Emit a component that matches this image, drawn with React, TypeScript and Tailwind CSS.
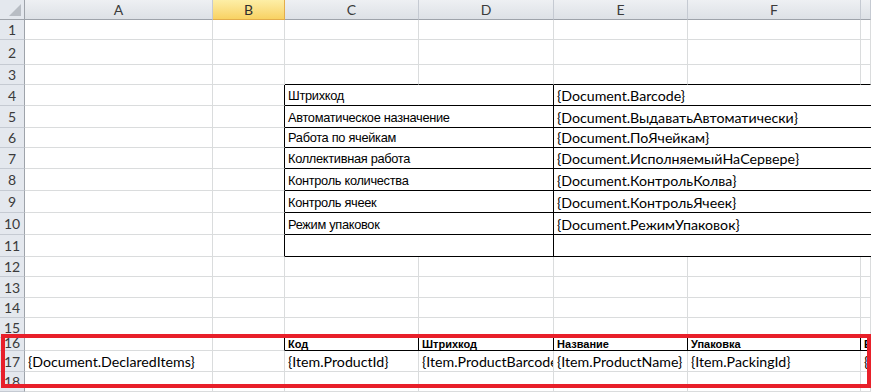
import React from "react";

// Spreadsheet template preview (Excel 2010 look)

type CellSpec = {
  w?: number; // width in px, undefined = fill remaining
  text?: string;
  kind?: "label" | "field" | "head";
  r?: "grid" | "black" | "none";
  b?: "grid" | "black";
};

const W = { A: 188, B: 72, C: 134, D: 135, E: 134, F: 173 };

const calibri = "font-['Lato','Open_Sans',sans-serif]";

function Cell({ w, text, kind = "field", r = "grid", b = "grid" }: CellSpec) {
  const border =
    (r === "black" ? "border-r border-r-black " : r === "none" ? "" : "border-r border-r-[#dadcdd] ") +
    (b === "black" ? "border-b border-b-black" : "border-b border-b-[#dadcdd]");
  const font =
    kind === "label"
      ? "font-['Liberation_Sans',Arial,sans-serif] text-[12.8px] tracking-[-0.3px] leading-[15px] pb-[2px]"
      : kind === "head"
        ? "font-['Liberation_Sans',Arial,sans-serif] text-[11px] font-bold leading-[12px]"
        : `${calibri} text-[14.2px] leading-[17px] pb-[1px]`;
  return (
    <div
      className={`${border} ${font} flex items-end overflow-hidden whitespace-nowrap pl-[3px] text-black ${w ? "shrink-0" : "flex-1"}`}
      style={w ? { width: w } : undefined}
    >
      {text}
    </div>
  );
}

function Row({ n, h, cells, clipTop }: { n: number; h: number; cells: CellSpec[]; clipTop?: boolean }) {
  return (
    <div className="flex" style={{ height: h }}>
      <div
        className={`w-[25px] shrink-0 border-r border-b border-r-[#9ea3aa] border-b-[#c5cad2] bg-[#e4e8ee] ${calibri} flex justify-center overflow-hidden text-[14px] text-[#3b3b3b] ${clipTop ? "items-end leading-[14px]" : "items-center"}`}
      >
        {n}
      </div>
      {cells.map((c, i) => (
        <Cell key={i} {...c} />
      ))}
    </div>
  );
}

const plain = (): CellSpec[] => [
  { w: W.A },
  { w: W.B },
  { w: W.C },
  { w: W.D },
  { w: W.E },
  { w: W.F },
  {},
];

const blackBottomFromC = (): CellSpec[] => [
  { w: W.A },
  { w: W.B },
  { w: W.C, b: "black" },
  { w: W.D, b: "black" },
  { w: W.E, b: "black" },
  { w: W.F, b: "black" },
  { b: "black" },
];

const settings: [string, string][] = [
  ["Штрихкод", "{Document.Barcode}"],
  ["Автоматическое назначение", "{Document.ВыдаватьАвтоматически}"],
  ["Работа по ячейкам", "{Document.ПоЯчейкам}"],
  ["Коллективная работа", "{Document.ИсполняемыйНаСервере}"],
  ["Контроль количества", "{Document.КонтрольКолва}"],
  ["Контроль ячеек", "{Document.КонтрольЯчеек}"],
  ["Режим упаковок", "{Document.РежимУпаковок}"],
  ["", ""],
];
const settingHeights = [21, 22, 20, 21, 22, 22, 22, 22];

const settingRow = (label: string, value: string): CellSpec[] => [
  { w: W.A },
  { w: W.B, r: "black" },
  { w: W.C + W.D, text: label, kind: "label", r: "black", b: "black" },
  { text: value, b: "black", r: "none" },
];

function ColHeader({ label, w, active }: { label: string; w?: number; active?: boolean }) {
  return (
    <div
      className={`${w ? "shrink-0" : "flex-1"} flex items-center justify-center border-r border-b ${calibri} text-[14px] ${
        active
          ? "border-r-[#e3ad4b] border-b-[#e3ad4b] bg-gradient-to-b from-[#fdeea6] to-[#f8d262] text-[#2e2e2e]"
          : "border-r-[#c5cad2] border-b-[#9ea3aa] bg-gradient-to-b from-[#eef0f3] to-[#dde1e6] text-[#3b3b3b]"
      }`}
      style={w ? { width: w } : undefined}
    >
      {label}
    </div>
  );
}

export default function App() {
  return (
    <div className="relative h-[392px] w-[871px] overflow-hidden bg-white">
      {/* column headers */}
      <div className="flex h-[20px]">
        <div className="relative w-[25px] shrink-0 border-r border-b border-r-[#9ea3aa] border-b-[#9ea3aa] bg-[#e4e8ee]">
          <svg className="absolute right-[3px] bottom-[3px]" width="12" height="12" viewBox="0 0 12 12">
            <polygon points="12,0 12,12 0,12" fill="#b8bdc4" />
          </svg>
        </div>
        <ColHeader label="A" w={W.A} />
        <ColHeader label="B" w={W.B} active />
        <ColHeader label="C" w={W.C} />
        <ColHeader label="D" w={W.D} />
        <ColHeader label="E" w={W.E} />
        <ColHeader label="F" w={W.F} />
        <ColHeader label="" />
      </div>

      <Row n={1} h={20} cells={plain()} />
      <Row n={2} h={25} cells={plain()} />
      <Row n={3} h={20} cells={blackBottomFromC()} />
      {settings.map(([l, v], i) => (
        <Row key={i} n={4 + i} h={settingHeights[i]} cells={settingRow(l, v)} />
      ))}
      <Row n={12} h={20} cells={plain()} />
      <Row n={13} h={21} cells={plain()} />
      <Row n={14} h={20} cells={plain()} />
      <Row n={15} h={20} cells={blackBottomFromC()} />
      <Row
        n={16}
        h={13}
        clipTop
        cells={[
          { w: W.A },
          { w: W.B, r: "black" },
          { w: W.C, text: "Код", kind: "head", r: "black", b: "black" },
          { w: W.D, text: "Штрихкод", kind: "head", r: "black", b: "black" },
          { w: W.E, text: "Название", kind: "head", r: "black", b: "black" },
          { w: W.F, text: "Упаковка", kind: "head", r: "black", b: "black" },
          { text: "Ед", kind: "head", b: "black" },
        ]}
      />
      <Row
        n={17}
        h={21}
        cells={[
          { w: W.A, text: "{Document.DeclaredItems}" },
          { w: W.B },
          { w: W.C, text: "{Item.ProductId}" },
          { w: W.D, text: "{Item.ProductBarcode}" },
          { w: W.E, text: "{Item.ProductName}" },
          { w: W.F, text: "{Item.PackingId}" },
          { text: "{Item" },
        ]}
      />
      <Row n={18} h={20} cells={plain()} />

      {/* red highlight frame drawn over the sheet */}
      <div className="pointer-events-none absolute top-[334px] left-[1px] h-[54px] w-[870px] border-4 border-[#e8202a]" />
    </div>
  );
}
